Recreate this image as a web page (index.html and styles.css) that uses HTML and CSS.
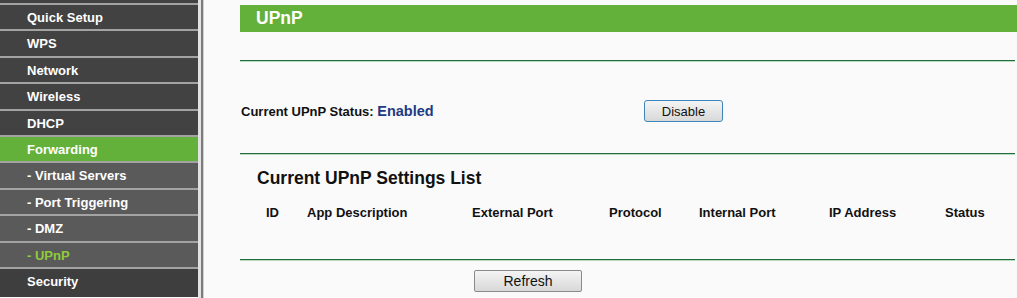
FILE: index.html
```html
<!DOCTYPE html>
<html lang="en">
<head>
    <meta charset="UTF-8">
    <title>UPnP</title>
    <link rel="stylesheet" href="styles.css">
</head>
<body>

    <!-- Menu -->
    <ul class="menu">
        <li class="item">Quick Setup</li>
        <li class="item">WPS</li>
        <li class="item">Network</li>
        <li class="item">Wireless</li>
        <li class="item">DHCP</li>
        <li class="item open">Forwarding</li>
        <li class="item sub">- Virtual Servers</li>
        <li class="item sub">- Port Triggering</li>
        <li class="item sub">- DMZ</li>
        <li class="item sub active">- UPnP</li>
        <li class="item last">Security</li>
    </ul>

    <div class="divider"></div>

    <div class="main">
        <div class="banner">UPnP</div>
        <div class="rule rule-top"></div>

        <div class="status-row">
            <div class="status-label">Current UPnP Status: <span class="enabled">Enabled</span></div>
            <button class="btn btn-blue">Disable</button>
        </div>

        <div class="rule rule-mid"></div>

        <h2 class="list-title">Current UPnP Settings List</h2>
        <div class="list-head">
            <span>ID</span>
            <span>App Description</span>
            <span>External Port</span>
            <span>Protocol</span>
            <span>Internal Port</span>
            <span>IP Address</span>
            <span>Status</span>
        </div>

        <div class="rule rule-bottom"></div>

        <button class="btn btn-refresh">Refresh</button>
    </div>

</body>
</html>
```

FILE: styles.css
```css
* {
    margin: 0;
    padding: 0;
    box-sizing: border-box;
    font-family: 'Liberation Sans', Arial, sans-serif;
}
body {
    background: #fafafa;
    display: flex;
    align-items: flex-start;
    height: 100vh;
    overflow: hidden;
}

/* Menu */
.menu {
    list-style: none;
    width: 198px;
    flex-shrink: 0;
    background: #424242;
    padding-top: 3px;
}
.item {
    height: 26.4px;
    line-height: 24px;
    padding-top: 1px;
    border-top: 2px solid #a3a3a3;
    background: #424242;
    color: #fff;
    font-size: 13px;
    font-weight: bold;
    padding-left: 27px;
}
.item.open { background: #63b13a; }
.item.sub { background: #5a5a5a; }
.item.active { color: #8fca3c; }
.item.last { background: #3e3e3e; height: 30px; }

/* Garis pemisah */
.divider {
    width: 6px;
    height: 100vh;
    flex-shrink: 0;
    background: #f4f4f4;
    border-left: 3px solid #e2e2e2;
    border-right: 1px solid #d0d0d0;
}
.divider::after {
    content: "";
    display: block;
    width: 2px;
    height: 100%;
    background: #7c7c7c;
}

/* Konten */
.main {
    flex: 1;
    padding-left: 36px;
    padding-top: 5px;
}
.banner {
    height: 27px;
    line-height: 26px;
    background: #63b13a;
    color: #fff;
    font-size: 17.5px;
    font-weight: bold;
    padding-left: 16px;
}
.rule {
    height: 2px;
    border-top: 1px solid #256d40;
    background: #b7dcbc;
    margin-right: 2px;
}
.rule-top { margin-top: 28px; }
.rule-mid { margin-top: 31px; }
.rule-bottom { margin-top: 38px; }

.status-row {
    display: flex;
    align-items: center;
    margin-top: 38px;
    height: 22px;
}
.status-label {
    width: 404px;
    padding-left: 1px;
    font-size: 13px;
    font-weight: bold;
    color: #111;
}
.enabled {
    color: #1d3b82;
    font-size: 14.5px;
}

.btn {
    height: 22px;
    font-size: 13px;
    color: #111;
    background: linear-gradient(#f4f4f4, #e6e6e6 50%, #d8d8d8);
    cursor: pointer;
}
.btn-blue {
    width: 79px;
    border: 1px solid #3d86bb;
    border-radius: 3px;
}
.btn-refresh {
    width: 108px;
    margin-top: 9px;
    margin-left: 234px;
    font-size: 14px;
    border: 1px solid #8a8a8a;
    border-radius: 2px;
}

.list-title {
    margin-top: 13px;
    padding-left: 17px;
    font-size: 17.5px;
    line-height: 20px;
    color: #111;
}
.list-head {
    display: grid;
    grid-template-columns: 41px 165px 137px 90px 130px 116px auto;
    padding-left: 26px;
    margin-top: 17px;
    font-size: 13px;
    font-weight: bold;
    line-height: 16px;
    color: #111;
}
```
